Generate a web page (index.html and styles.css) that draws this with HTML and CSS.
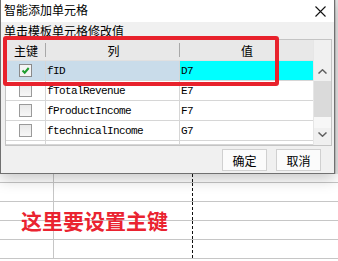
FILE: index.html
```html
<!DOCTYPE html>
<html lang="zh">
<head>
  <meta charset="UTF-8" />
  <title>智能添加单元格</title>
  <link rel="stylesheet" href="styles.css">
</head>
<body>

<div class="top">
  <!-- Диалог -->
  <div class="dialog">
    <div class="titlebar">
      <span class="title">智能添加单元格</span>
      <svg class="close" width="11" height="11" viewBox="0 0 11 11">
        <path d="M0.5 0.5 L10.5 10.5 M10.5 0.5 L0.5 10.5" stroke="#111" stroke-width="1.1" fill="none"/>
      </svg>
    </div>
    <div class="dlg-body">
      <div class="hint">单击模板单元格修改值</div>
      <div class="grid">
        <div class="table">
          <div class="row head">
            <div class="cell c1">主键</div>
            <div class="cell c2">列</div>
            <div class="cell c3">值</div>
          </div>
          <div class="row selected">
            <div class="cell c1"><span class="chk on"><svg width="11" height="11" viewBox="0 0 11 11"><path d="M2.5 5.5 L4.7 7.7 L8.7 3" stroke="#1f9e2f" stroke-width="2" fill="none"/></svg></span></div>
            <div class="cell c2">fID</div>
            <div class="cell c3 value">D7</div>
          </div>
          <div class="row">
            <div class="cell c1"><span class="chk"></span></div>
            <div class="cell c2">fTotalRevenue</div>
            <div class="cell c3">E7</div>
          </div>
          <div class="row">
            <div class="cell c1"><span class="chk"></span></div>
            <div class="cell c2">fProductIncome</div>
            <div class="cell c3">F7</div>
          </div>
          <div class="row">
            <div class="cell c1"><span class="chk"></span></div>
            <div class="cell c2">ftechnicalIncome</div>
            <div class="cell c3">G7</div>
          </div>
          <div class="row stub">
            <div class="cell c1"></div>
            <div class="cell c2"></div>
            <div class="cell c3"></div>
          </div>
        </div>
        <div class="scroll">
          <div class="sb-corner"></div>
          <div class="sb-btn">
            <svg width="9" height="5" viewBox="0 0 9 5"><path d="M0.5 4.5 L4.5 0.8 L8.5 4.5" stroke="#606060" stroke-width="1.5" fill="none"/></svg>
          </div>
          <div class="sb-thumb"></div>
          <div class="sb-track"></div>
          <div class="sb-btn down">
            <svg width="9" height="5" viewBox="0 0 9 5"><path d="M0.5 0.5 L4.5 4.2 L8.5 0.5" stroke="#606060" stroke-width="1.5" fill="none"/></svg>
          </div>
        </div>
      </div>
      <div class="buttons">
        <button class="btn">确定</button>
        <button class="btn">取消</button>
      </div>
    </div>
    <!-- Пометка красной рамкой -->
    <div class="mark"></div>
  </div>
  <div class="edge"></div>
</div>

<!-- Лист таблицы -->
<div class="sheet">
  <div class="srow first"><div class="sc a"></div><div class="sc b"></div><div class="sc c"></div></div>
  <div class="srow"><div class="sc a"></div><div class="sc b"></div><div class="sc c"></div></div>
  <div class="srow"><div class="sc a"></div><div class="sc b"></div><div class="sc c"></div></div>
  <div class="srow"><div class="sc a"></div><div class="sc b"></div><div class="sc c"></div></div>
  <div class="srow"><div class="sc a"></div><div class="sc b"></div><div class="sc c"></div></div>
  <div class="note">这里要设置主键</div>
</div>

</body>
</html>
```

FILE: styles.css
```css
/* Reset */
* {
  margin: 0;
  padding: 0;
  box-sizing: border-box;
}

body {
  width: 338px;
  height: 261px;
  overflow: hidden;
  background: #fff;
  font-family: "Noto Sans CJK SC", "Noto Sans", sans-serif;
  font-size: 12px;
  color: #000;
}

.top {
  display: flex;
  height: 174px;
  position: relative;
  z-index: 2;
}

.edge {
  flex: 1;
  background: #e4e4e4;
  border-left: 1px solid #c8c8c8;
}

/* Диалог */
.dialog {
  width: 335px;
  height: 174px;
  position: relative;
  background: #f0f0f0;
  border: 1px solid #707070;
  border-top: none;
  box-shadow: 0 5px 14px rgba(0, 0, 0, 0.22);
}

.titlebar {
  height: 22px;
  background: #fff;
  display: flex;
  align-items: center;
  justify-content: space-between;
  padding: 0 8px 2px 3px;
}

.title {
  line-height: 16px;
}

.close {
  display: block;
  margin-top: 2px;
}

.dlg-body {
  height: 151px;
  padding: 0 0 2px 0;
}

.hint {
  height: 17px;
  line-height: 17px;
  padding-left: 3px;
}

.grid {
  margin-left: 4px;
  width: 327px;
  height: 107px;
  border: 1px solid #c4c4c4;
  background: #fff;
  display: flex;
}

.table {
  width: 307px;
  display: flex;
  flex-direction: column;
}

.row {
  display: flex;
  height: 20px;
  border-bottom: 1px solid #d6d6d6;
  font-family: "Liberation Mono", "DejaVu Sans Mono", monospace;
  font-size: 11px;
  letter-spacing: -0.6px;
}

.row.head {
  height: 21px;
  background: #e8e8e8;
  border-bottom: 1px solid #e0e0e0;
  font-family: "Noto Sans CJK SC", sans-serif;
  font-size: 12px;
  letter-spacing: 0;
}

.row.stub {
  height: 4px;
}

.cell {
  display: flex;
  align-items: center;
  border-right: 1px solid #d6d6d6;
  padding-left: 1px;
  overflow: hidden;
  white-space: nowrap;
}

.c1 { width: 40px; justify-content: center; padding-left: 0; }
.c2 { width: 134px; }
.c3 { flex: 1; border-right: none; }

.head .cell {
  justify-content: center;
  border-right: none;
  position: relative;
}

.head .c1::after,
.head .c2::after {
  content: '';
  position: absolute;
  right: 0;
  top: 3px;
  bottom: 3px;
  width: 1px;
  background: #a8a8a8;
}

.selected .c1,
.selected .c2 {
  background: #c9dcea;
}

.selected .value {
  background: #00ffff;
}

.chk {
  width: 13px;
  height: 13px;
  border: 1px solid #9a9a9a;
  background: linear-gradient(#e9e9e9, #f7f7f7);
  display: flex;
  align-items: center;
  justify-content: center;
}

.chk.on {
  background: #f4f4f4;
  border-color: #8a8a8a;
}

/* Скроллбар */
.scroll {
  flex: 1;
  display: flex;
  flex-direction: column;
  background: #f0f0f0;
  border-left: 1px solid #e6e6e6;
}

.sb-corner { height: 21px; background: #f0f0f0; }

.sb-btn {
  height: 20px;
  display: flex;
  align-items: center;
  justify-content: center;
  background: #f0f0f0;
}

.sb-btn.down {
  height: 17px;
  align-items: flex-start;
  padding-top: 4px;
}

.sb-thumb { height: 36px; background: #dadada; }
.sb-track { height: 11px; background: #f7f7f7; }

/* Кнопки */
.buttons {
  display: flex;
  justify-content: flex-end;
  gap: 9px;
  margin-top: 3px;
  padding-right: 13px;
}

.btn {
  width: 45px;
  height: 22px;
  background: #fbfbfb;
  border: 1px solid #d0d0d0;
  font-family: "Noto Sans CJK SC", sans-serif;
  font-size: 12px;
  color: #000;
}

.mark {
  position: absolute;
  left: 2px;
  top: 36px;
  width: 276px;
  height: 50px;
  border: 4px solid #e8222c;
  border-radius: 3px;
}

/* Лист */
.sheet {
  position: relative;
  z-index: 1;
  height: 87px;
  overflow: hidden;
}

.srow {
  display: flex;
  height: 19px;
  border-bottom: 1px solid #c6c6c6;
}

.srow.first { height: 9px; }

.sc.a { width: 54px; border-right: 1px solid #c6c6c6; }
.sc.b { width: 139px; border-right: 1px dashed #111; }
.sc.c { flex: 1; }

.note {
  position: absolute;
  left: 21px;
  top: 34px;
  font-size: 21px;
  line-height: 24px;
  font-weight: bold;
  color: #ea2330;
}
```
